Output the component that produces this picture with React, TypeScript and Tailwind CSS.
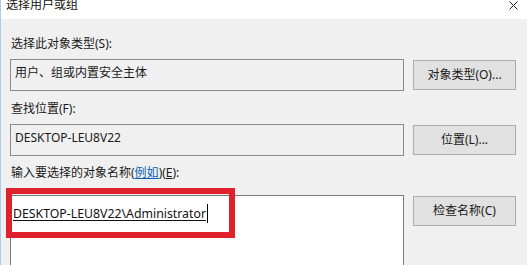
import React from 'react';

const cjk = "font-['Noto_Sans','Noto_Sans_CJK_SC',sans-serif]";

const Button = ({ children, className = '' }: { children: React.ReactNode; className?: string }) => (
  <div
    className={`w-[103px] h-[30px] flex items-center justify-center bg-[#e1e1e1] border border-[#adadad] text-[12px] text-[#1a1a1a] ${className}`}
  >
    {children}
  </div>
);

const App = () => {
  return (
    <div className={`relative w-[527px] h-[265px] overflow-hidden bg-[#f0f0f0] border-l border-[#a9cdee] ${cjk}`}>
      {/* title bar */}
      <div className="h-[19px] bg-white flex items-start justify-between pl-[5px] pr-[9px]">
        <span className="text-[12px] leading-[12px] -mt-[1px] text-[#111]">选择用户或组</span>
        <svg width="9" height="9" viewBox="0 0 9 9" className="mt-[1px]">
          <path d="M0.5 0.5 L8.5 8.5 M8.5 0.5 L0.5 8.5" stroke="#222" strokeWidth="1" />
        </svg>
      </div>

      <div className="pl-[10px] text-[12px] leading-[16px] text-[#1a1a1a]">
        <div className="pt-[17px]">选择此对象类型(S):</div>
        <div className="flex gap-[9px] mt-[7px] -ml-[1px]">
          <div className="w-[394px] h-[32px] border border-[#8a8a8a] px-[4px] pt-[5px]">用户、组或内置安全主体</div>
          <Button className="mt-[1px]">对象类型(O)...</Button>
        </div>

        <div className="mt-[10px]">查找位置(F):</div>
        <div className="flex gap-[9px] mt-[7px] -ml-[1px]">
          <div className="w-[394px] h-[32px] border border-[#8a8a8a] px-[4px] pt-[5px]">DESKTOP-LEU8V22</div>
          <Button className="mt-[1px]">位置(L)...</Button>
        </div>

        <div className="mt-[9px]">
          输入要选择的对象名称(<span className="text-[#0a5fb4] underline">例如</span>)(<span className="underline">E</span>):
        </div>
        <div className="flex gap-[9px] mt-[14px] -ml-[1px]">
          <div className="w-[394px] h-[80px] bg-white border-t border-l border-r border-[#7a7a7a] pl-[2px] pt-[8px]">
            <span className="inline-flex items-center text-[12.3px] leading-[18px] text-[#111]">
              <span className="underline underline-offset-2">DESKTOP-LEU8V22\Administrator</span>
              <span className="inline-block w-[1px] h-[19px] bg-black ml-[1px]" />
            </span>
          </div>
          <Button className="mt-[1px] h-[29px]">检查名称(C)</Button>
        </div>
      </div>

      {/* red annotation */}
      <div className="absolute left-[5px] top-[188px] w-[229px] h-[50px] border-[6px] border-[#e0212b]" />
    </div>
  );
};

export default App;
